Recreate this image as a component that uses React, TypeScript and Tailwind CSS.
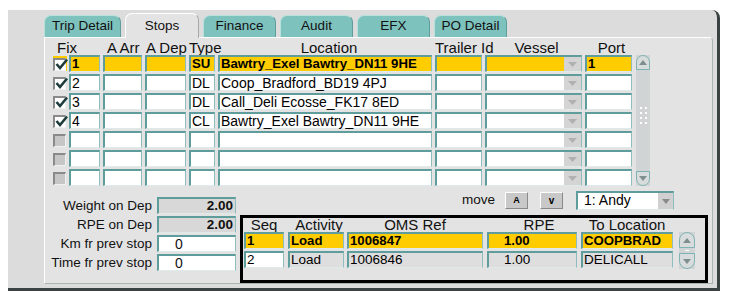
import React from "react";

const FB =
  "border-t-2 border-l-2 border-r border-b border-t-[#5f9c9c] border-l-[#5f9c9c] border-r-[#8fbcbc] border-b-[#dfeaea]";

type Row = {
  checked?: boolean;
  fix?: string;
  type?: string;
  loc?: string;
  port?: string;
  hl?: boolean;
};

const rows: Row[] = [
  { checked: true, fix: "1", type: "SU", loc: "Bawtry_Exel Bawtry_DN11 9HE", port: "1", hl: true },
  { checked: true, fix: "2", type: "DL", loc: "Coop_Bradford_BD19 4PJ" },
  { checked: true, fix: "3", type: "DL", loc: "Call_Deli Ecosse_FK17 8ED" },
  { checked: true, fix: "4", type: "CL", loc: "Bawtry_Exel Bawtry_DN11 9HE" },
  {},
  {},
  {},
];

function Cell({
  w,
  hl,
  bg,
  small,
  children,
}: {
  w: string;
  hl?: boolean;
  bg?: string;
  small?: boolean;
  children?: React.ReactNode;
}) {
  return (
    <div
      className={`h-[17px] shrink-0 ${w} ${FB} ${hl ? "bg-[#ffcc00]" : bg ?? "bg-white"} ${
        hl ? "font-bold text-[13.2px]" : small ? "text-[13.5px]" : "text-[14px]"
      } pl-[1px] leading-[14px] whitespace-nowrap text-black`}
    >
      {children}
    </div>
  );
}

function DropCell({ w, hl }: { w: string; hl?: boolean }) {
  return (
    <div
      className={`h-[17px] shrink-0 ${w} ${FB} ${hl ? "bg-[#ffcc00]" : "bg-white"} flex items-stretch`}
    >
      <div className="flex-1" />
      <div className="w-[17px] bg-[#d4d4d4] flex items-center justify-center">
        <svg width="9" height="5" viewBox="0 0 9 5">
          <path d="M0 0 H9 L4.5 5 Z" fill="#b0b0b0" />
        </svg>
      </div>
    </div>
  );
}

function Check({ checked, hl }: { checked?: boolean; hl?: boolean }) {
  return (
    <div className={`w-[14px] h-[15px] shrink-0 flex items-end ${hl ? "bg-[#ffcc00]" : ""}`}>
      <div
        className={`w-[13px] h-[13px] border-t-2 border-l-2 border-t-[#8a8a8a] border-l-[#8a8a8a] border-r border-b border-r-[#f0f0f0] border-b-[#f0f0f0] ${
          checked ? "bg-white" : "bg-[#c6c6c6]"
        } relative`}
      >
        {checked && (
          <svg className="absolute left-[0px] top-[-2px]" width="13" height="12" viewBox="0 0 13 12">
            <path d="M1.5 6 L5 10 L12 1.5" stroke="#1e3c3c" strokeWidth="2.6" fill="none" />
          </svg>
        )}
      </div>
    </div>
  );
}

function ScrollBtn({ up, size }: { up?: boolean; size: string }) {
  return (
    <div
      className={`${size} bg-[#d8dcdc] border border-[#7fb3b3] ${
        up ? "rounded-t-full" : "rounded-b-full"
      } flex items-center justify-center`}
    >
      <svg width="8" height="5" viewBox="0 0 8 5">
        {up ? <path d="M0 5 H8 L4 0 Z" fill="#7f8f8f" /> : <path d="M0 0 H8 L4 5 Z" fill="#7f8f8f" />}
      </svg>
    </div>
  );
}

const tabs = ["Trip Detail", "Stops", "Finance", "Audit", "EFX", "PO Detail"];
const tabW = ["w-[77px]", "w-[74px]", "w-[73px]", "w-[73px]", "w-[73px]", "w-[73px]"];

export default function App() {
  return (
    <div
      className="w-[732px] h-[300px] bg-white pt-[10px] pl-[8px] text-black"
      style={{ fontFamily: '"Liberation Sans", Arial, sans-serif' }}
    >
      <div className="w-[712px] h-[281px] bg-[#dcdcdc] border-r-[3px] border-b-[3px] border-[#3a4242] rounded-tr-[8px] pl-[36px] pt-[3px]">
        {/* tabs */}
        <div className="flex items-end gap-[4px] h-[24px]">
          {tabs.map((t, i) =>
            i === 1 ? (
              <div
                key={t}
                className={`${tabW[i]} h-[25px] -mb-[1px] relative z-10 bg-[#e3e3e3] rounded-t-[7px] border-t border-l border-r border-t-white border-l-white border-r-[#a8a8a8] flex items-center justify-center text-[13.5px] text-[#111]`}
              >
                {t}
              </div>
            ) : (
              <div
                key={t}
                className={`${tabW[i]} h-[22px] bg-[#7ec2be] rounded-t-[7px] border-t border-l border-r border-t-[#b8e0dc] border-l-[#b8e0dc] border-r-[#5f9c9c] flex items-center justify-center text-[13.5px] text-[#111]`}
              >
                {t}
              </div>
            )
          )}
        </div>
        {/* panel */}
        <div className="w-[669px] h-[247px] bg-[#e3e3e3] border border-t-white border-l-white border-r-[#a9b5b5] border-b-[#a9b5b5] rounded-tr-[4px] pl-[8px]">
          {/* header */}
          <div className="flex gap-[3px] h-[17px] items-end text-[15px] leading-[15px] whitespace-nowrap text-[#111]">
            <div className="w-[13px] shrink-0 pl-[4px]">Fix</div>
            <div className="w-[31px] shrink-0" />
            <div className="w-[39px] shrink-0 pl-[4px]">A Arr</div>
            <div className="w-[41px] shrink-0 pl-[1px]">A Dep</div>
            <div className="w-[26px] shrink-0">Type</div>
            <div className="w-[214px] shrink-0 text-center pl-[8px]">Location</div>
            <div className="w-[47px] shrink-0">Trailer Id</div>
            <div className="w-[97px] shrink-0 text-center pl-[6px]">Vessel</div>
            <div className="w-[47px] shrink-0 text-center pl-[6px]">Port</div>
          </div>
          {/* grid */}
          <div className="flex">
            <div className="flex flex-col gap-[2px]">
              {rows.map((r, i) => (
                <div key={i} className="flex gap-[3px] items-center h-[17px]">
                  <div className="w-[13px] shrink-0 flex items-center">
                    <Check checked={r.checked} hl={r.hl} />
                  </div>
                  <Cell w="w-[31px]" hl={r.hl}>{r.fix}</Cell>
                  <Cell w="w-[39px]" hl={r.hl} />
                  <Cell w="w-[41px]" hl={r.hl} />
                  <Cell w="w-[26px]" hl={r.hl}>{r.type}</Cell>
                  <Cell w="w-[214px]" hl={r.hl}>{r.loc}</Cell>
                  <Cell w="w-[47px]" hl={r.hl} />
                  <DropCell w="w-[97px]" hl={r.hl} />
                  <Cell w="w-[47px]" hl={r.hl}>{r.port}</Cell>
                </div>
              ))}
            </div>
            <div className="ml-[4px] w-[14px] h-[131px] flex flex-col bg-[#d0d4d4]">
              <ScrollBtn up size="w-[14px] h-[15px]" />
              <div className="flex-1 flex flex-col items-center justify-center gap-[3px] pb-[10px]">
                <div className="flex gap-[3px]"><span className="w-[2px] h-[2px] bg-white" /><span className="w-[2px] h-[2px] bg-white" /></div>
                <div className="flex gap-[3px]"><span className="w-[2px] h-[2px] bg-white" /><span className="w-[2px] h-[2px] bg-white" /></div>
                <div className="flex gap-[3px]"><span className="w-[2px] h-[2px] bg-white" /><span className="w-[2px] h-[2px] bg-white" /></div>
                <div className="flex gap-[3px]"><span className="w-[2px] h-[2px] bg-white" /><span className="w-[2px] h-[2px] bg-white" /></div>
              </div>
              <ScrollBtn size="w-[14px] h-[15px]" />
            </div>
          </div>
          {/* bottom */}
          <div className="flex -ml-[8px]">
            <div className="flex flex-col gap-[2px] mt-[11px] text-[13.5px] leading-[14px] text-[#111]">
              {[
                ["Weight on Dep", "2.00", true],
                ["RPE on Dep", "2.00", true],
                ["Km fr prev stop", "0", false],
                ["Time fr prev stop", "0", false],
              ].map(([l, v, g], i) => (
                <div key={i} className="flex items-center h-[17px]">
                  <div className="w-[107px] text-right whitespace-nowrap">{l as string}</div>
                  <div
                    className={`ml-[5px] w-[79px] h-[17px] ${FB} ${
                      g ? "bg-[#d8d8d8] font-bold text-right pr-[2px] text-[13.5px]" : "bg-white pl-[16px] text-[14px]"
                    } leading-[14px]`}
                  >
                    {v as string}
                  </div>
                </div>
              ))}
            </div>
            <div className="ml-[4px] flex flex-col">
              <div className="h-[19px] mt-[5px] flex items-center text-[13.5px]">
                <span className="ml-[222px] w-[34px] whitespace-nowrap text-[#111]">move</span>
                <div className="ml-[9px] w-[23px] h-[17px] bg-[#c8c8c8] border border-t-white border-l-white border-r-[#8a8a8a] border-b-[#8a8a8a] flex items-center justify-center text-[9px] font-bold">
                  A
                </div>
                <div className="ml-[12px] w-[23px] h-[17px] bg-[#c8c8c8] border border-t-white border-l-white border-r-[#8a8a8a] border-b-[#8a8a8a] flex items-center justify-center text-[10px] font-bold">
                  v
                </div>
                <div className={`ml-[13px] w-[98px] h-[19px] ${FB} bg-white flex items-stretch`}>
                  <div className="flex-1 pl-[6px] text-[14px] leading-[15px]">1: Andy</div>
                  <div className="w-[15px] bg-[#d0d0d0] flex items-center justify-center">
                    <svg width="8" height="5" viewBox="0 0 8 5">
                      <path d="M0 0 H8 L4 5 Z" fill="#8a8a8a" />
                    </svg>
                  </div>
                </div>
              </div>
              <div className="mt-[5px] w-[468px] h-[68px] border-[3px] border-black bg-[#e3e3e3]">
                <div className="flex h-[14px] pl-[1px] text-[15px] leading-[14px] text-[#111] whitespace-nowrap">
                  <div className="w-[40px] text-center">Seq</div>
                  <div className="ml-[4px] w-[56px] text-center pl-[6px]">Activity</div>
                  <div className="ml-[3px] w-[136px] text-center">OMS Ref</div>
                  <div className="ml-[4px] w-[90px] text-center pl-[14px]">RPE</div>
                  <div className="ml-[4px] w-[92px] text-center">To Location</div>
                </div>
                <div className="flex pl-[1px]">
                  <div className="flex flex-col gap-[2px]">
                    <div className="flex h-[17px]">
                      <Cell w="w-[40px]" hl>1</Cell>
                      <div className="ml-[4px]"><Cell w="w-[56px]" hl>Load</Cell></div>
                      <div className="ml-[3px]"><Cell w="w-[136px]" hl>1006847</Cell></div>
                      <div className="ml-[4px]"><Cell w="w-[90px]" hl><span className="pl-[14px]">1.00</span></Cell></div>
                      <div className="ml-[4px]"><Cell w="w-[92px]" hl>COOPBRAD</Cell></div>
                    </div>
                    <div className="flex h-[17px]">
                      <Cell w="w-[40px]" small>2</Cell>
                      <div className="ml-[4px]"><Cell w="w-[56px]" small bg="bg-[#dedede]">Load</Cell></div>
                      <div className="ml-[3px]"><Cell w="w-[136px]" small bg="bg-[#dedede]">1006846</Cell></div>
                      <div className="ml-[4px]"><Cell w="w-[90px]" small bg="bg-[#dedede]"><span className="pl-[14px]">1.00</span></Cell></div>
                      <div className="ml-[4px]"><Cell w="w-[92px]" small bg="bg-[#dedede]">DELICALL</Cell></div>
                    </div>
                  </div>
                  <div className="ml-[6px] w-[16px] h-[37px] flex flex-col bg-[#d0d4d4]">
                    <ScrollBtn up size="w-[16px] h-[16px]" />
                    <div className="flex-1 flex items-center justify-center">
                      <span className="w-[4px] h-[1px] bg-white" />
                    </div>
                    <ScrollBtn size="w-[16px] h-[16px]" />
                  </div>
                </div>
              </div>
            </div>
          </div>
        </div>
      </div>
    </div>
  );
}
